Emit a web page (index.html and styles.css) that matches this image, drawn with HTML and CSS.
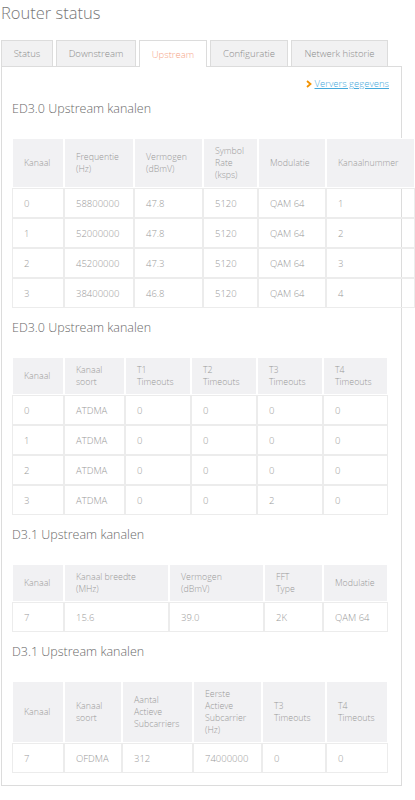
FILE: index.html
```html
<!DOCTYPE html>
<html lang="nl">
<head>
<meta charset="utf-8">
<title>Router status</title>
<link rel="stylesheet" href="styles.css">
</head>
<body>
<div class="page">
  <h1 class="title">Router status</h1>
  <div class="tabs">
    <div class="tab">Status</div>
    <div class="tab">Downstream</div>
    <div class="tab active">Upstream</div>
    <div class="tab">Configuratie</div>
    <div class="tab">Netwerk historie</div>
  </div>
  <div class="panel">
    <div class="refresh">
      <svg class="chev" width="6" height="8" viewBox="0 0 6 8"><polyline points="1,1 4.5,4 1,7" fill="none" stroke="#f39200" stroke-width="1.8"/></svg>
      <a href="#" class="link">Ververs gegevens</a>
    </div>

    <h2 class="heading">ED3.0 Upstream kanalen</h2>
    <table class="grid wide">
      <colgroup><col class="c52"><col class="c70"><col class="c69"><col class="c55"><col class="c68"><col class="c89"></colgroup>
      <thead><tr><th>Kanaal</th><th>Frequentie<br>(Hz)</th><th>Vermogen<br>(dBmV)</th><th>Symbol<br>Rate<br>(ksps)</th><th>Modulatie</th><th>Kanaalnummer</th></tr></thead>
      <tbody>
        <tr><td>0</td><td>58800000</td><td>47.8</td><td>5120</td><td>QAM 64</td><td>1</td></tr>
        <tr><td>1</td><td>52000000</td><td>47.8</td><td>5120</td><td>QAM 64</td><td>2</td></tr>
        <tr><td>2</td><td>45200000</td><td>47.3</td><td>5120</td><td>QAM 64</td><td>3</td></tr>
        <tr><td>3</td><td>38400000</td><td>46.8</td><td>5120</td><td>QAM 64</td><td>4</td></tr>
      </tbody>
    </table>

    <h2 class="heading">ED3.0 Upstream kanalen</h2>
    <table class="grid">
      <colgroup><col class="c52"><col class="c61"><col class="c66"><col class="c66"><col class="c66"><col class="c65"></colgroup>
      <thead><tr><th>Kanaal</th><th>Kanaal<br>soort</th><th>T1<br>Timeouts</th><th>T2<br>Timeouts</th><th>T3<br>Timeouts</th><th>T4<br>Timeouts</th></tr></thead>
      <tbody>
        <tr><td>0</td><td>ATDMA</td><td>0</td><td>0</td><td>0</td><td>0</td></tr>
        <tr><td>1</td><td>ATDMA</td><td>0</td><td>0</td><td>0</td><td>0</td></tr>
        <tr><td>2</td><td>ATDMA</td><td>0</td><td>0</td><td>0</td><td>0</td></tr>
        <tr><td>3</td><td>ATDMA</td><td>0</td><td>0</td><td>2</td><td>0</td></tr>
      </tbody>
    </table>

    <h2 class="heading">D3.1 Upstream kanalen</h2>
    <table class="grid">
      <colgroup><col class="c52"><col class="c105"><col class="c95"><col class="c59"><col class="c65"></colgroup>
      <thead><tr><th>Kanaal</th><th>Kanaal breedte<br>(MHz)</th><th>Vermogen<br>(dBmV)</th><th>FFT<br>Type</th><th>Modulatie</th></tr></thead>
      <tbody>
        <tr><td>7</td><td>15.6</td><td>39.0</td><td>2K</td><td>QAM 64</td></tr>
      </tbody>
    </table>

    <h2 class="heading">D3.1 Upstream kanalen</h2>
    <table class="grid">
      <colgroup><col class="c52"><col class="c58"><col class="c71"><col class="c69"><col class="c64"><col class="c62"></colgroup>
      <thead><tr><th>Kanaal</th><th>Kanaal<br>soort</th><th>Aantal<br>Actieve<br>Subcarriers</th><th>Eerste<br>Actieve<br>Subcarrier<br>(Hz)</th><th>T3<br>Timeouts</th><th>T4<br>Timeouts</th></tr></thead>
      <tbody>
        <tr><td>7</td><td>OFDMA</td><td>312</td><td>74000000</td><td>0</td><td>0</td></tr>
      </tbody>
    </table>
  </div>
</div>
</body>
</html>
```

FILE: styles.css
```css
* { box-sizing: border-box; }
html, body { margin: 0; padding: 0; background: #fff; }
body { font-family: "Open Sans", Lato, sans-serif; font-weight: 300; color: #999; }
.page { padding: 0 0 0 1px; width: 415px; }

.title {
  margin: 0;
  padding-top: 2px;
  font-size: 16.5px;
  line-height: 22px;
  font-weight: 300;
  color: #777;
  height: 40px;
}

.tabs { display: flex; gap: 3px; align-items: flex-end; height: 26px; }
.tab {
  height: 26px;
  padding: 0;
  display: flex;
  align-items: center;
  justify-content: center;
  white-space: nowrap;
  font-size: 9.5px;
  color: #8c8c8c;
  background: #f1f1f2;
  border: 1px solid #dcdcdc;
  border-bottom: none;
}
.tab:nth-child(1) { width: 52px; }
.tab:nth-child(2) { width: 80px; }
.tab:nth-child(3) { width: 68px; }
.tab:nth-child(4) { width: 78px; }
.tab:nth-child(5) { width: 97px; }
.tab.active {
  height: 27px;
  margin-bottom: -1px;
  background: #fff;
  color: #f5a385;
  position: relative;
  z-index: 1;
}

.panel {
  width: 401px;
  border: 1px solid #dcdcdc;
  padding: 9px 12px 12px 10px;
}

.refresh {
  display: flex;
  justify-content: flex-end;
  align-items: center;
  gap: 3px;
  height: 15px;
  font-size: 9.5px;
}
.chev { display: block; }
.link { color: #45a9dc; text-decoration: underline; }

.heading {
  margin: 11px 0 20px;
  font-size: 12.5px;
  line-height: 18px;
  font-weight: 300;
  color: #6a6a6a;
}
.refresh + .heading { margin-top: 9px; }

.grid {
  border-collapse: separate;
  border-spacing: 0;
  table-layout: fixed;
  width: 376px;
  font-size: 9.5px;
  color: #999;
  position: relative;
}
.grid.wide { width: 403px; }
.grid th {
  background: #f1f1f3;
  border: 1px solid #fff;
  font-weight: 300;
  font-size: 8.8px;
  text-align: left;
  line-height: 12px;
  padding: 6px 4px 6px 11px;
  vertical-align: middle;
}
.grid td {
  border: 1px solid #ececec;
  line-height: 13px;
  padding: 7.5px 4px 7.5px 11px;
  text-align: left;
  white-space: nowrap;
}

.c52 { width: 52px; }
.c55 { width: 55px; }
.c58 { width: 58px; }
.c59 { width: 59px; }
.c61 { width: 61px; }
.c62 { width: 62px; }
.c64 { width: 64px; }
.c65 { width: 65px; }
.c66 { width: 66px; }
.c68 { width: 68px; }
.c69 { width: 69px; }
.c70 { width: 70px; }
.c71 { width: 71px; }
.c89 { width: 89px; }
.c95 { width: 95px; }
.c105 { width: 105px; }
```
